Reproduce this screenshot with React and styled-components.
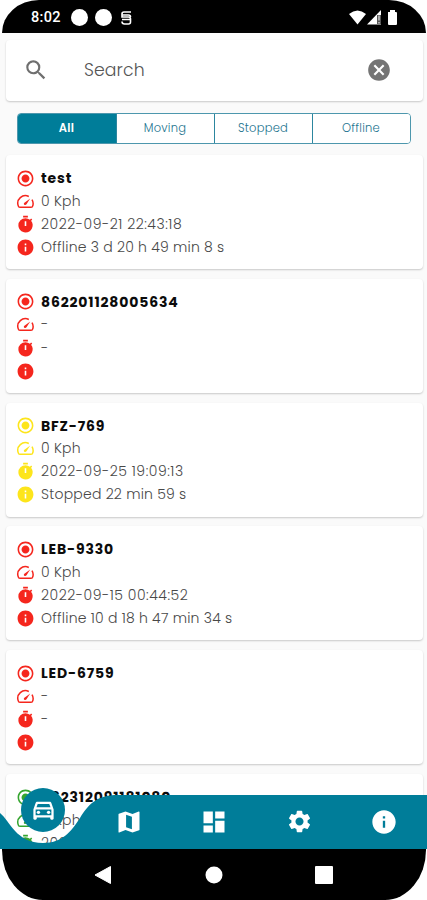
import React from "react";
import styled, { createGlobalStyle } from "styled-components";
import {
  MdSearch, MdCancel, MdRadioButtonChecked, MdTimer, MdInfo,
  MdOutlineDirectionsCar, MdDashboard, MdSettings,
} from "react-icons/md";

const TEAL = "#007d99";
const RED = "#f5261d";
const YELLOW = "#fde51b";
const GREEN = "#35a52f";

const GlobalStyle = createGlobalStyle`
  * { box-sizing: border-box; }
  body { margin: 0; background: #fff; font-family: Poppins, Inter, sans-serif; }
`;

const Phone = styled.div`
  position: relative;
  width: 427px;
  height: 900px;
  overflow: hidden;
  display: flex;
  flex-direction: column;
  background: #fff;
`;

const StatusBar = styled.header`
  flex: none;
  height: 33px;
  margin: 0 1px 0 2px;
  padding: 2px 28px 0 29px;
  display: flex;
  align-items: center;
  background: #000;
  color: #fff;
  border-radius: 38px 38px 0 0 / 34px 34px 0 0;
`;

const Clock = styled.span`
  width: 40px;
  font-size: 14.5px;
  font-weight: 500;
  font-family: Roboto, sans-serif;
  letter-spacing: 0.35px;
`;

const Dot = styled.i`
  width: 17px;
  height: 17px;
  margin-right: 7px;
  border-radius: 50%;
  background: #fff;
`;

const StatusIcons = styled.svg`
  margin-left: auto;
`;

const Screen = styled.main`
  flex: 1;
  min-height: 0;
  overflow: hidden;
  padding: 7px 4px 0 6px;
  background: #fafafa;
`;

const Surface = styled.section`
  background: #fff;
  border-radius: 4px;
  box-shadow: 0 1px 2px rgba(0, 0, 0, 0.2);
`;

const SearchBox = styled(Surface)`
  height: 61px;
  padding: 0 31.5px 2px 17px;
  display: flex;
  align-items: center;
  color: #6f6f6f;
`;

const SearchText = styled.span`
  flex: 1;
  margin-left: 35px;
  font-size: 17.3px;
  font-weight: 300;
  letter-spacing: 0.1px;
  color: #555;
`;

const Segments = styled.div`
  display: grid;
  grid-template-columns: repeat(4, 1fr);
  height: 31px;
  margin: 12px 12px 11px 11px;
  border: 1px solid #4d97ad;
  border-radius: 4px;
  overflow: hidden;
  background: #fff;
`;

const Segment = styled.div`
  display: flex;
  align-items: center;
  justify-content: center;
  padding-right: 1px;
  font-size: 11.5px;
  letter-spacing: 0.25px;
  font-weight: ${(p) => (p.$active ? 600 : 300)};
  color: ${(p) => (p.$active ? "#fff" : "#23748f")};
  background: ${(p) => (p.$active ? TEAL : "#fff")};
  & + & { border-left: 1px solid #2c869f; }
`;

const CardList = styled.div`
  display: flex;
  flex-direction: column;
  gap: 9.8px;
`;

const Card = styled(Surface)`
  flex: none;
  height: 114px;
  padding: 11.5px 10px 0;
`;

const Row = styled.div`
  height: 23.1px;
  display: flex;
  align-items: center;
  white-space: nowrap;
  svg { flex: none; color: ${(p) => p.$tone}; }
`;

const Name = styled.strong`
  margin-left: 6px;
  font-size: 14px;
  line-height: 20px;
  font-weight: 700;
  letter-spacing: 0.84px;
  color: #0c0c0c;
`;

const Detail = styled.span`
  margin: 0 0 1px 6px;
  font-size: 14px;
  line-height: 20px;
  font-weight: 300;
  letter-spacing: ${(p) => (p.$numeric ? 0.52 : 0.22)}px;
  color: #484848;
`;

const NavBar = styled.nav`
  position: absolute;
  left: 0;
  bottom: 51px;
  width: 427px;
  height: 54px;
  padding: 0 0 1px 1px;
  display: grid;
  grid-template-columns: repeat(5, 1fr);
  align-items: center;
  justify-items: center;
  color: #fff;
`;

const NavShape = styled.svg`
  position: absolute;
  inset: 0;
`;

const NavItem = styled.div`
  position: relative;
  display: flex;
`;

const ActiveNavItem = styled(NavItem)`
  width: 44px;
  height: 44px;
  margin-right: 1px;
  top: -12px;
  border-radius: 50%;
  align-items: center;
  justify-content: center;
  background: ${TEAL};
`;

const SystemBar = styled.footer`
  flex: none;
  height: 51px;
  display: flex;
  align-items: center;
  justify-content: space-between;
  padding: 0 93px 0 92px;
  margin: 0 1px 0 2px;
  background: #000;
  border-radius: 0 0 41px 41px / 0 0 50px 50px;
`;

const vehicles = [
  { name: "test", tone: RED, speed: "0 Kph", time: "2022-09-21 22:43:18", state: "Offline 3 d 20 h 49 min 8 s" },
  { name: "862201128005634", tone: RED, speed: "-", time: "-", state: "" },
  { name: "BFZ-769", tone: YELLOW, speed: "0 Kph", time: "2022-09-25 19:09:13", state: "Stopped 22 min 59 s" },
  { name: "LEB-9330", tone: RED, speed: "0 Kph", time: "2022-09-15 00:44:52", state: "Offline 10 d 18 h 47 min 34 s" },
  { name: "LED-6759", tone: RED, speed: "-", time: "-", state: "" },
  { name: "862312091181080", tone: GREEN, speed: "0 Kph", time: "202", state: "" },
];

function SpeedIcon() {
  return (
    <svg width="19" height="19" viewBox="0 0 19 19" fill="none" stroke="currentColor" strokeWidth="1.5">
      <path d="M12.800 4.500A7.600 7.600 0 0 0 2.300 14Q2.500 15.300 4 15.300H15Q16.500 15.300 16.700 14A7.600 7.600 0 0 0 16 7.600" />
      <path d="M8.100 10.900 14.200 6.400 10.500 12.300Q9.400 13.600 8.300 12.700Q7.300 11.800 8.100 10.900Z" fill="currentColor" stroke="none" />
    </svg>
  );
}

function VehicleCard({ v }) {
  return (
    <Card>
      <Row $tone={v.tone}><MdRadioButtonChecked size={19} /><Name>{v.name}</Name></Row>
      <Row $tone={v.tone}><SpeedIcon /><Detail>{v.speed}</Detail></Row>
      <Row $tone={v.tone}><MdTimer size={19} /><Detail $numeric>{v.time}</Detail></Row>
      <Row $tone={v.tone}><MdInfo size={19} /><Detail>{v.state}</Detail></Row>
    </Card>
  );
}

export default function App() {
  return (
    <Phone>
      <GlobalStyle />
      <StatusBar>
        <Clock>8:02</Clock>
        <Dot /><Dot />
        <svg width="14" height="16" viewBox="0 0 14 16" fill="none" stroke="#fff" strokeWidth="1.6">
          <path d="M12 2H5Q3 2 3 4v3h6.500q2 0 2 2v3q0 2-2 2H5.500Q3 14 3 11.500M3 5h6.500q2 0 2 2M3 9.500h8" />
        </svg>
        <StatusIcons width="49" height="17" viewBox="0 0 49 17" fill="#fff">
          <path d="M0 5Q8.500-2 17 5L8.500 15.500Z" />
          <path d="M18 15.500 32 1v14.500Z" />
          <path d="M28 6h4v9h-4Z" fill="#555" />
          <path d="M29.500 6.500h1v5h-1zM29.500 13h1v1.500h-1z" />
          <path d="M39 3h2V1h5v2h1q1 0 1 1v11q0 1-1 1h-7q-1 0-1-1Z" />
        </StatusIcons>
      </StatusBar>

      <Screen>
        <SearchBox>
          <MdSearch size={26} />
          <SearchText>Search</SearchText>
          <MdCancel size={26} color="#757575" />
        </SearchBox>
        <Segments>
          <Segment $active>All</Segment>
          <Segment>Moving</Segment>
          <Segment>Stopped</Segment>
          <Segment>Offline</Segment>
        </Segments>
        <CardList>
          {vehicles.map((v) => <VehicleCard key={v.name} v={v} />)}
        </CardList>
      </Screen>

      <NavBar>
        <NavShape width="427" height="54" viewBox="0 0 427 54">
          <path d="M0 18C10 26 16 48 43 48C62 48 71 37 80 23C88 10 96 0 118 0H427V54H0Z" fill={TEAL} />
        </NavShape>
        <ActiveNavItem><MdOutlineDirectionsCar size={27} /></ActiveNavItem>
        <NavItem>
          <svg width="28" height="28" viewBox="0 0 24 24" fill="currentColor">
            <path d="m20.500 3-.16.030L15 5.100 9 3 3.360 4.900c-.21.070-.36.250-.36.480V20.500c0 .28.220.5.5.5l.16-.030L9 18.900l6 2.100 5.640-1.900c.21-.070.36-.25.360-.48V3.500c0-.28-.22-.5-.5-.5zM9.500 5.700l5 1.750v10.850l-5-1.750z" fillRule="evenodd" />
          </svg>
        </NavItem>
        <NavItem><MdDashboard size={28} /></NavItem>
        <NavItem><MdSettings size={27} /></NavItem>
        <NavItem><MdInfo size={28} /></NavItem>
      </NavBar>

      <SystemBar>
        <svg width="18" height="20" viewBox="0 0 18 20" fill="#fff"><path d="M1 10 16.500 1.500v17Z" stroke="#fff" strokeLinejoin="round" /></svg>
        <svg width="18" height="18" viewBox="0 0 18 18"><circle cx="9" cy="9" r="8.500" fill="#fff" /></svg>
        <svg width="18" height="18" viewBox="0 0 18 18"><rect width="18" height="18" rx="1" fill="#fff" /></svg>
      </SystemBar>
    </Phone>
  );
}
